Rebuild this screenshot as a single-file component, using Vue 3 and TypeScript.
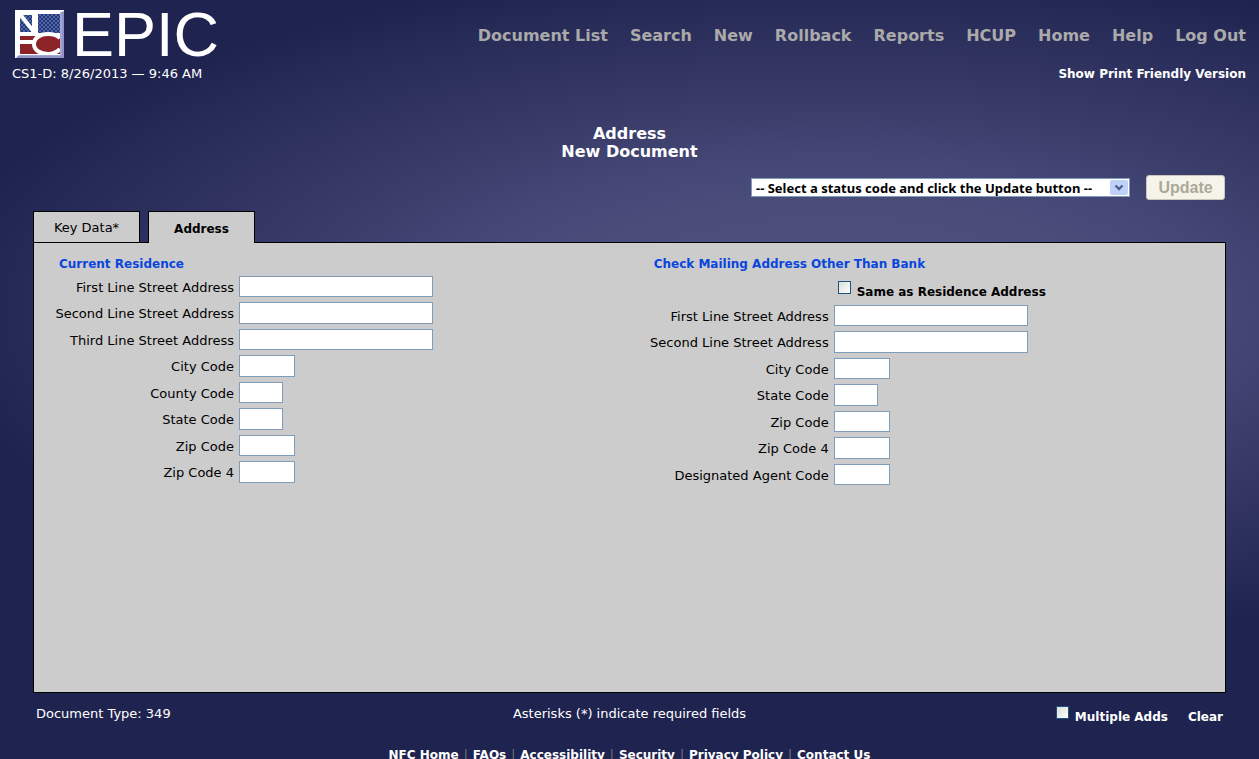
<script setup lang="ts">
import { ref } from 'vue'

interface Field {
  id: string
  label: string
  size: 'long' | 'medium' | 'short'
}

const menu = ['Document List', 'Search', 'New', 'Rollback', 'Reports', 'HCUP', 'Home', 'Help', 'Log Out']
const footer = ['NFC Home', 'FAQs', 'Accessibility', 'Security', 'Privacy Policy', 'Contact Us']

const residence: Field[] = [
  { id: 'res-line1', label: 'First Line Street Address', size: 'long' },
  { id: 'res-line2', label: 'Second Line Street Address', size: 'long' },
  { id: 'res-line3', label: 'Third Line Street Address', size: 'long' },
  { id: 'res-city', label: 'City Code', size: 'medium' },
  { id: 'res-county', label: 'County Code', size: 'short' },
  { id: 'res-state', label: 'State Code', size: 'short' },
  { id: 'res-zip', label: 'Zip Code', size: 'medium' },
  { id: 'res-zip4', label: 'Zip Code 4', size: 'medium' },
]

const mailing: Field[] = [
  { id: 'mail-line1', label: 'First Line Street Address', size: 'long' },
  { id: 'mail-line2', label: 'Second Line Street Address', size: 'long' },
  { id: 'mail-city', label: 'City Code', size: 'medium' },
  { id: 'mail-state', label: 'State Code', size: 'short' },
  { id: 'mail-zip', label: 'Zip Code', size: 'medium' },
  { id: 'mail-zip4', label: 'Zip Code 4', size: 'medium' },
  { id: 'mail-agent', label: 'Designated Agent Code', size: 'medium' },
]

const values = ref<Record<string, string>>({})
const sameAddress = ref(false)
const multipleAdds = ref(false)
const status = ref('')
</script>

<template>
  <div class="page">
    <header class="top">
      <div class="brand">
        <div class="logo">
          <svg class="emblem" viewBox="0 0 49 48" aria-hidden="true">
            <defs>
              <pattern id="stars" width="4" height="4" patternUnits="userSpaceOnUse">
                <rect width="4" height="4" fill="#22397f" />
                <circle cx="1" cy="1" r="0.7" fill="#a9b5dd" />
                <circle cx="3" cy="3" r="0.7" fill="#a9b5dd" />
              </pattern>
            </defs>
            <rect width="49" height="48" fill="#fff" />
            <rect x="5" y="5" width="12" height="17" fill="url(#stars)" />
            <rect x="23" y="4" width="22" height="19" fill="url(#stars)" />
            <path d="M4 3L19 22" stroke="#fff" stroke-width="4" />
            <path d="M5 26H45V44H5Z" fill="#8c2326" />
            <path d="M5 32H20" stroke="#fff" stroke-width="4" />
            <path d="M45 28C41 24 36 24 33 24C25 24 19 28 19 34C19 40 25 44 33 44C38 44 42 42 45 39" fill="none" stroke="#fff" stroke-width="4" />
            <path d="M40 30H46V38H40Z" fill="#8c2326" />
            <path d="M45 2H49V48H1L4 45H45Z" fill="#a3a5d2" />
            <path d="M48 1V47H2" fill="none" stroke="#7f82b3" stroke-width="1" />
          </svg>
          <span class="wordmark">EPIC</span>
        </div>
        <div class="stamp">CS1-D: 8/26/2013 — 9:46 AM</div>
      </div>
      <div class="top-links">
        <nav class="menu" aria-label="Main">
          <a v-for="item in menu" :key="item" href="#">{{ item }}</a>
        </nav>
        <a class="print" href="#">Show Print Friendly Version</a>
      </div>
    </header>

    <h1 class="title">Address<br />New Document</h1>

    <main class="content">
      <div class="actions">
        <div class="select-box">
          <select v-model="status" class="status" aria-label="Status code">
            <option value="">-- Select a status code and click the Update button --</option>
          </select>
          <svg class="arrow" viewBox="0 0 18 15" aria-hidden="true">
            <rect width="18" height="15" rx="2" fill="#bfd0fa" />
            <path d="M5.5 5.5L9 9L12.5 5.5" fill="none" stroke="#4d6185" stroke-width="2.4" />
          </svg>
        </div>
        <button class="update" type="button" disabled>Update</button>
      </div>

      <div class="tabs" role="tablist">
        <button class="tab" type="button" role="tab" aria-selected="false">Key Data*</button>
        <button class="tab active" type="button" role="tab" aria-selected="true">Address</button>
      </div>

      <form class="panel" @submit.prevent>
        <section>
          <h2>Current Residence</h2>
          <div class="rows">
            <div v-for="f in residence" :key="f.id" class="row">
              <label :for="f.id">{{ f.label }}</label>
              <input :id="f.id" v-model="values[f.id]" type="text" :class="f.size" />
            </div>
          </div>
        </section>
        <section>
          <h2>Check Mailing Address Other Than Bank</h2>
          <label class="check same">
            <input v-model="sameAddress" type="checkbox" />
            <span>Same as Residence Address</span>
          </label>
          <div class="rows">
            <div v-for="f in mailing" :key="f.id" class="row">
              <label :for="f.id">{{ f.label }}</label>
              <input :id="f.id" v-model="values[f.id]" type="text" :class="f.size" />
            </div>
          </div>
        </section>
      </form>

      <div class="status-bar">
        <span>Document Type: 349</span>
        <span>Asterisks (*) indicate required fields</span>
        <div class="extras">
          <label class="check">
            <input v-model="multipleAdds" type="checkbox" />
            <span>Multiple Adds</span>
          </label>
          <a href="#">Clear</a>
        </div>
      </div>
    </main>

    <footer class="footer">
      <a v-for="item in footer" :key="item" href="#">{{ item }}</a>
    </footer>
  </div>
</template>

<style>
body {
  background: #1f234f;
  overflow: hidden;
}
</style>

<style scoped>
.page {
  box-sizing: border-box;
  min-height: 100vh;
  padding-top: 8px;
  font-family: Verdana, 'DejaVu Sans', sans-serif;
  font-size: 13px;
  line-height: 16px;
  color: #fff;
  background: radial-gradient(
    ellipse 900px 345px at 66% 310px,
    #50537f 0%,
    #4a4d7a 32%,
    #444775 45%,
    #3c3f6c 56%,
    #323561 72%,
    #262a57 90%,
    #1f234f 100%
  );
}

a {
  color: inherit;
  text-decoration: none;
  font-weight: bold;
}

.top {
  display: flex;
  justify-content: space-between;
  padding: 0 13px 0 12px;
}

.logo {
  display: flex;
  align-items: center;
  height: 52px;
  padding-left: 3px;
  gap: 8px;
}

.emblem {
  width: 49px;
  height: 48px;
}

.wordmark {
  font-family: 'Liberation Sans', Arial, sans-serif;
  font-size: 63px;
  line-height: 52px;
}

.stamp {
  margin-top: 6px;
}

.top-links {
  display: flex;
  flex-direction: column;
  align-items: flex-end;
  padding-top: 16px;
}

.menu {
  display: flex;
  gap: 22px;
  font-size: 16px;
  line-height: 24px;
  color: #aaa;
}

.print {
  margin-top: 18px;
  font-size: 12px;
}

.title {
  margin: 43px 0 0;
  font-size: 16px;
  line-height: 18px;
  text-align: center;
}

.content {
  padding: 0 33px;
}

.actions {
  display: flex;
  justify-content: flex-end;
  align-items: center;
  gap: 16px;
  margin-top: 14px;
  padding-right: 1px;
}

.select-box {
  position: relative;
  width: 379px;
  height: 19px;
}

.status {
  display: block;
  appearance: none;
  box-sizing: border-box;
  width: 100%;
  height: 100%;
  padding: 0 20px 0 4px;
  border: 1px solid #7f9db9;
  border-radius: 0;
  background: #fff;
  color: #000;
  font: bold 13px/16px 'Noto Sans', sans-serif;
}

.arrow {
  position: absolute;
  top: 2px;
  right: 2px;
  width: 18px;
  height: 15px;
  pointer-events: none;
}

.update {
  width: 79px;
  height: 25px;
  padding: 0;
  border: 1px solid #c9c7ba;
  border-radius: 3px;
  background: #f5f4ea;
  color: #aca899;
  font: bold 16px/20px 'Liberation Sans', Arial, sans-serif;
}

.tabs {
  display: flex;
  gap: 8px;
  margin-top: 11px;
}

.tab {
  width: 107px;
  height: 31px;
  padding: 2px 0 0;
  border: 1px solid #000;
  border-bottom: 0;
  background: #ccc;
  color: #000;
  font: 13px/16px Verdana, 'DejaVu Sans', sans-serif;
}

.tab.active {
  position: relative;
  height: 32px;
  margin-bottom: -1px;
  font-size: 12px;
  font-weight: bold;
}

.panel {
  display: grid;
  grid-template-columns: 51% 49%;
  box-sizing: border-box;
  min-height: 451px;
  padding: 12px 0 12px 25px;
  border: 1px solid #000;
  background: #ccc;
  color: #000;
}

h2 {
  margin: 0;
  font-size: 12px;
  line-height: 18px;
  color: #0a46dc;
}

.rows {
  display: grid;
  gap: 5px;
  margin-top: 3px;
  margin-left: -5px;
}

.row {
  display: grid;
  grid-template-columns: 180px 1fr;
  align-items: center;
  gap: 5px;
}

.row label {
  padding-top: 2px;
  text-align: right;
  white-space: nowrap;
}

.row input {
  box-sizing: border-box;
  height: 21px;
  padding: 0 3px;
  border: 1px solid #7f9db9;
  background: #fff;
}

.row:nth-child(even) input {
  height: 22px;
}

.long {
  width: 194px;
}

.medium {
  width: 56px;
}

.short {
  width: 44px;
}

.check {
  display: flex;
  gap: 6px;
  font-weight: bold;
  font-size: 12px;
}

.check input {
  appearance: none;
  box-sizing: border-box;
  width: 13px;
  height: 13px;
  margin: 0;
  border: 1px solid #1c5180;
  background: linear-gradient(135deg, #dcdcd7, #fff);
}

.check span {
  padding-top: 3px;
}

.same {
  margin: 8px 0 0 184px;
  padding-bottom: 2px;
}

.status-bar {
  display: grid;
  grid-template-columns: 1fr auto 1fr;
  margin-top: 13px;
  padding: 0 3px;
}

.extras {
  display: flex;
  justify-content: flex-end;
  gap: 20px;
  font-size: 12px;
}

.extras a {
  padding-top: 3px;
}

.footer {
  display: flex;
  justify-content: center;
  margin-top: 22px;
  font-size: 12px;
}

.footer a + a::before {
  content: '|';
  margin: 0 5px;
  color: #777;
  font-weight: normal;
}
</style>
